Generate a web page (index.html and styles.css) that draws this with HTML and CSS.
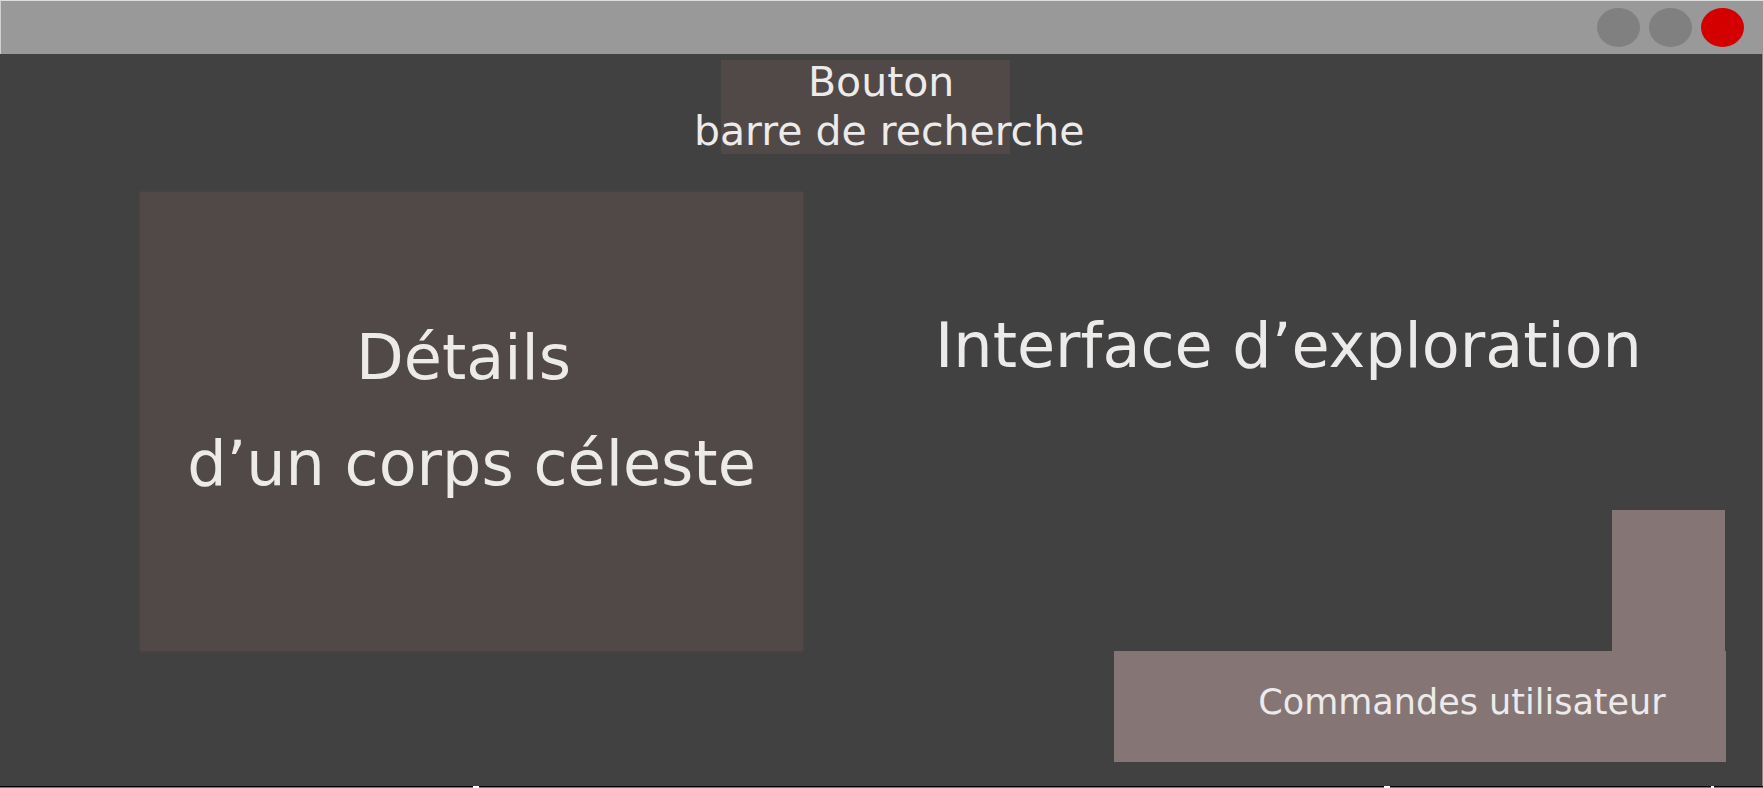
FILE: index.html
```html
<!DOCTYPE html>
<html lang="fr">
<head>
<meta charset="utf-8">
<title>Interface d’exploration</title>
<link rel="stylesheet" href="styles.css">
</head>
<body>
<div class="window">
  <header class="titlebar">
    <button class="dot" type="button" aria-label="Réduire"></button>
    <button class="dot" type="button" aria-label="Agrandir"></button>
    <button class="dot dot-close" type="button" aria-label="Fermer"></button>
  </header>
  <main class="content">
    <button class="search" type="button">
      <span class="search-line first-line">Bouton</span>
      <span class="search-line">barre de recherche</span>
    </button>
    <div class="panels">
      <section class="details">
        <span class="first-line">Détails</span>
        <span>d’un corps céleste</span>
      </section>
      <section class="explore">
        <h1 class="explore-title">Interface d’exploration</h1>
        <div class="tower"></div>
      </section>
      <section class="commands">Commandes utilisateur</section>
    </div>
  </main>
  <footer class="edge">
    <span class="mark mark-a"></span>
    <span class="mark mark-b"></span>
    <span class="mark mark-c"></span>
  </footer>
</div>
</body>
</html>
```

FILE: styles.css
```css
* {
  box-sizing: border-box;
}

body {
  margin: 0;
  background: #414141;
  color: #edeaea;
  font-family: "DejaVu Sans", sans-serif;
}

button {
  border: 0;
  padding: 0;
  color: inherit;
  font-family: inherit;
}

.window {
  display: flex;
  flex-direction: column;
  min-height: 100vh;
}

.titlebar {
  display: flex;
  justify-content: flex-end;
  align-items: center;
  gap: 9px;
  height: 54px;
  padding-right: 19px;
  border-top: 1px solid #dcdedd;
  border-left: 1px solid #d0d0d0;
  background: #999999;
}

.dot {
  width: 43px;
  height: 39px;
  border-radius: 50%;
  background: #808080;
}

.dot-close {
  background: #d40000;
}

.content {
  display: flex;
  flex: 1;
  flex-direction: column;
  padding: 6px 0 24px;
  border-right: 1px solid #8a8a8a;
}

.search {
  display: flex;
  flex-direction: column;
  align-items: center;
  justify-content: center;
  width: 289px;
  height: 94px;
  margin-left: 40.9%;
  background: #514848;
  font-size: 41px;
  line-height: 49px;
  white-space: nowrap;
}

.search-line {
  margin-left: 48px;
}

.first-line {
  padding-right: 16px;
}

.panels {
  display: grid;
  flex: 1;
  grid-template-columns: 663fr 311fr 612fr;
  grid-template-rows: 1fr 111px;
  margin-top: 38px;
  padding: 0 36px 0 140px;
}

.details {
  display: flex;
  flex-direction: column;
  align-items: center;
  justify-content: center;
  padding-bottom: 22px;
  background: #514848;
  box-shadow: 0 0 4px #514848;
  font-size: 62px;
  line-height: 106px;
  white-space: nowrap;
}

.explore {
  display: flex;
  grid-column: 2 / 4;
  flex-direction: column;
  justify-content: space-between;
  padding: 101px 0 0 48px;
}

.explore-title {
  margin: 0;
  font-size: 62px;
  font-weight: normal;
  line-height: 106px;
  text-align: center;
  white-space: nowrap;
}

.tower {
  align-self: flex-end;
  width: 113px;
  height: 141px;
  margin-right: 1px;
  background: #857575;
}

.commands {
  display: flex;
  grid-column: 3;
  align-items: center;
  justify-content: center;
  padding: 0 0 10px 84px;
  background: #857575;
  font-size: 35px;
  white-space: nowrap;
}

.edge {
  position: relative;
  height: 2px;
  border-top: 1px solid #000000;
  background: #777777;
}

.mark {
  position: absolute;
  top: -1px;
  width: 6px;
  height: 2px;
  background: #ffffff;
}

.mark-a {
  left: 473px;
}

.mark-b {
  left: 1384px;
}

.mark-c {
  left: 1711px;
  width: 3px;
}
```
